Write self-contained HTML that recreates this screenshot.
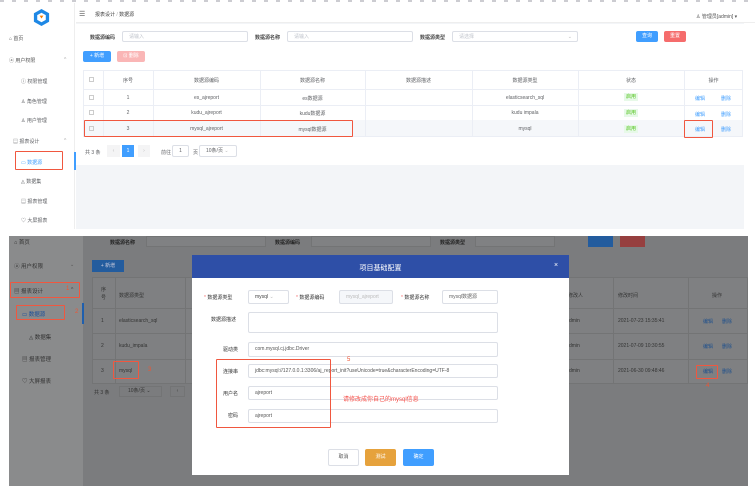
<!DOCTYPE html>
<html><head><meta charset="utf-8"><style>
*{margin:0;padding:0;box-sizing:border-box}
body{width:755px;height:488px;background:#fff;position:relative;overflow:hidden;font-family:"Liberation Sans","Noto Sans CJK SC",sans-serif;font-size:5px;color:#606266}
.a{position:absolute;white-space:nowrap}
.box{position:absolute;border:1px solid #dcdfe6;background:#fff;border-radius:2px}
.rb{position:absolute;border:1.5px solid #f0573f;border-radius:1px}
.btn{position:absolute;border-radius:2px;color:#fff;text-align:center;font-size:5px}
.ph{color:#c0c4cc;padding-left:6px;line-height:10px}
.td{position:absolute;text-align:center;font-size:5px;color:#606266}
</style></head><body>
<div class="a" style="left:0;top:0;width:755px;height:2px;background:repeating-linear-gradient(90deg,#556 0 4px,#fff 4px 12px);opacity:.3"></div>

<div class="a" style="left:0;top:3px;width:75px;height:226px;background:#fff;border-right:1px solid #eee"></div>
<svg class="a" style="left:32px;top:8px" width="19" height="19" viewBox="0 0 20 20"><path d="M10 1 L18 5.5 V14.5 L10 19 L2 14.5 V5.5Z" fill="#1e88e5"/><path d="M10 5 L14.5 7.5 V12.5 L10 15 L5.5 12.5 V7.5Z" fill="#fff"/><path d="M8 8h4l-2 3z" fill="#f57c00"/></svg>
<div class="a" style="left:9px;top:35px;color:#555">⌂ 首页</div>
<div class="a" style="left:9px;top:57px;color:#555">ⓐ 用户权限</div><div class="a" style="left:64px;top:57px;color:#aaa">^</div>
<div class="a" style="left:21px;top:78px">ⓘ 权限管理</div>
<div class="a" style="left:21px;top:98px">♙ 角色管理</div>
<div class="a" style="left:21px;top:117px">♙ 用户管理</div>
<div class="a" style="left:13px;top:138px">▤ 报表设计</div><div class="a" style="left:64px;top:138px;color:#aaa">^</div>
<div class="a" style="left:21px;top:159px;color:#409eff">▭ 数据源</div>
<div class="rb" style="left:15px;top:151px;width:48px;height:19px"></div>
<div class="a" style="left:74px;top:152px;width:2px;height:18px;background:#409eff"></div>
<div class="a" style="left:21px;top:178px">◬ 数据集</div>
<div class="a" style="left:21px;top:198px">▤ 报表管理</div>
<div class="a" style="left:21px;top:217px">♡ 大屏报表</div>

<div class="a" style="left:76px;top:3px;width:668px;height:226px;background:#f3f5f8"></div>
<div class="a" style="left:76px;top:3px;width:679px;height:20px;background:#fff;border-bottom:1px solid #eee"></div>
<div class="a" style="left:79px;top:10px;font-size:7px;color:#555">☰</div>
<div class="a" style="left:95px;top:11px;color:#444">报表设计 <span style="color:#aaa">/</span> 数据源</div>
<div class="a" style="left:696px;top:13px;color:#555">♙ 管理员[admin] ▾</div>
<div class="a" style="left:76px;top:24px;width:668px;height:141px;background:#fff"></div>

<div class="a" style="left:90px;top:34px;color:#444;font-weight:bold">数据源编码</div>
<div class="box ph" style="left:122px;top:31px;width:126px;height:11px">请输入</div>
<div class="a" style="left:255px;top:34px;color:#444;font-weight:bold">数据源名称</div>
<div class="box ph" style="left:287px;top:31px;width:126px;height:11px">请输入</div>
<div class="a" style="left:420px;top:34px;color:#444;font-weight:bold">数据源类型</div>
<div class="box ph" style="left:452px;top:31px;width:126px;height:11px">请选择<span style="position:absolute;right:5px;color:#bbb">⌄</span></div>
<div class="btn" style="left:636px;top:31px;width:22px;height:11px;background:#409eff;line-height:11px">查询</div>
<div class="btn" style="left:664px;top:31px;width:22px;height:11px;background:#f56c6c;line-height:11px">重置</div>
<div class="btn" style="left:83px;top:51px;width:28px;height:11px;background:#409eff;line-height:11px">+ 新增</div>
<div class="btn" style="left:117px;top:51px;width:28px;height:11px;background:#fab6b6;line-height:11px">⊡ 删除</div>

<div class="a" style="left:83px;top:70px;width:660px;height:67px;border:1px solid #ebeef5"></div>
<div class="a" style="left:83px;top:89px;width:660px;height:1px;background:#ebeef5"></div>
<div class="a" style="left:83px;top:105px;width:660px;height:1px;background:#ebeef5"></div>
<div class="a" style="left:84px;top:120px;width:658px;height:16px;background:#f5f7fa"></div>
<div class="a" style="left:103px;top:70px;width:1px;height:67px;background:#ebeef5"></div>
<div class="a" style="left:153px;top:70px;width:1px;height:67px;background:#ebeef5"></div>
<div class="a" style="left:260px;top:70px;width:1px;height:67px;background:#ebeef5"></div>
<div class="a" style="left:365px;top:70px;width:1px;height:67px;background:#ebeef5"></div>
<div class="a" style="left:472px;top:70px;width:1px;height:67px;background:#ebeef5"></div>
<div class="a" style="left:578px;top:70px;width:1px;height:67px;background:#ebeef5"></div>
<div class="a" style="left:684px;top:70px;width:1px;height:67px;background:#ebeef5"></div>
<div class="a" style="left:89px;top:77px;width:5px;height:5px;border:1px solid #ccc"></div>
<div class="td" style="left:103px;top:77px;width:50px">序号</div>
<div class="td" style="left:153px;top:77px;width:107px">数据源编码</div>
<div class="td" style="left:260px;top:77px;width:105px">数据源名称</div>
<div class="td" style="left:365px;top:77px;width:107px">数据源描述</div>
<div class="td" style="left:472px;top:77px;width:106px">数据源类型</div>
<div class="td" style="left:578px;top:77px;width:106px">状态</div>
<div class="td" style="left:684px;top:77px;width:59px">操作</div>
<div class="a" style="left:89px;top:95px;width:5px;height:5px;border:1px solid #ccc"></div>
<div class="a" style="left:89px;top:110px;width:5px;height:5px;border:1px solid #ccc"></div>
<div class="a" style="left:89px;top:126px;width:5px;height:5px;border:1px solid #ccc"></div>
<div class="td" style="left:103px;top:95px;width:50px">1</div>
<div class="td" style="left:103px;top:110px;width:50px">2</div>
<div class="td" style="left:103px;top:126px;width:50px">3</div>
<div class="td" style="left:153px;top:95px;width:107px">es_ajreport</div>
<div class="td" style="left:153px;top:110px;width:107px">kudu_ajreport</div>
<div class="td" style="left:153px;top:126px;width:107px">mysql_ajreport</div>
<div class="td" style="left:260px;top:95px;width:105px">es数据源</div>
<div class="td" style="left:260px;top:110px;width:105px">kudu数据源</div>
<div class="td" style="left:260px;top:126px;width:105px">mysql数据源</div>
<div class="td" style="left:472px;top:95px;width:106px">elasticsearch_sql</div>
<div class="td" style="left:472px;top:110px;width:106px">kudu impala</div>
<div class="td" style="left:472px;top:126px;width:106px">mysql</div>
<div class="a" style="left:624px;top:93px;width:14px;height:8px;background:#e7f9e8;color:#52c41a;text-align:center;line-height:8px">启用</div>
<div class="a" style="left:624px;top:109px;width:14px;height:8px;background:#e7f9e8;color:#52c41a;text-align:center;line-height:8px">启用</div>
<div class="a" style="left:624px;top:125px;width:14px;height:8px;background:#e7f9e8;color:#52c41a;text-align:center;line-height:8px">启用</div>
<div class="a" style="left:695px;top:95px;color:#409eff">编辑</div><div class="a" style="left:721px;top:95px;color:#409eff">删除</div>
<div class="a" style="left:695px;top:111px;color:#409eff">编辑</div><div class="a" style="left:721px;top:111px;color:#409eff">删除</div>
<div class="a" style="left:695px;top:126px;color:#409eff">编辑</div><div class="a" style="left:721px;top:126px;color:#409eff">删除</div>
<div class="rb" style="left:84px;top:120px;width:269px;height:17px"></div>
<div class="rb" style="left:684px;top:120px;width:29px;height:18px"></div>
<div class="a" style="left:85px;top:149px">共 3 条</div>
<div class="a" style="left:107px;top:145px;width:13px;height:12px;background:#f4f4f5;color:#bbb;text-align:center;line-height:12px">‹</div>
<div class="a" style="left:122px;top:145px;width:12px;height:12px;background:#409eff;color:#fff;text-align:center;line-height:12px">1</div>
<div class="a" style="left:138px;top:145px;width:12px;height:12px;background:#f4f4f5;color:#bbb;text-align:center;line-height:12px">›</div>
<div class="a" style="left:161px;top:149px">前往</div>
<div class="box" style="left:172px;top:145px;width:17px;height:12px;text-align:center;line-height:10px">1</div>
<div class="a" style="left:193px;top:149px">页</div>
<div class="box" style="left:199px;top:145px;width:38px;height:12px;line-height:10px;padding-left:6px">10条/页 <span style="color:#bbb">⌄</span></div>

<div class="a" style="left:9px;top:236px;width:74px;height:250px;background:#8a8b8c"></div>
<div class="a" style="left:83px;top:236px;width:665px;height:250px;background:#7b7c7e"></div>
<div class="a" style="left:14px;top:238px;color:#333;font-size:5.5px">⌂ 首页</div>
<div class="a" style="left:14px;top:262px;color:#333;font-size:5.5px">ⓐ 用户权限</div><div class="a" style="left:70px;top:262px;color:#555">⌄</div>
<div class="a" style="left:14px;top:287px;color:#333;font-size:5.5px">▤ 报表设计</div>
<div class="a" style="left:66px;top:286px;color:#e53;font-size:6px">1</div><div class="a" style="left:71px;top:287px;color:#444">^</div>
<div class="rb" style="left:10px;top:282px;width:70px;height:16px"></div>
<div class="a" style="left:22px;top:310px;color:#1a4f9a;font-size:5.5px">▭ 数据源</div>
<div class="rb" style="left:16px;top:305px;width:49px;height:15px"></div>
<div class="a" style="left:75px;top:309px;color:#e53;font-size:6px">2</div>
<div class="a" style="left:82px;top:303px;width:1.5px;height:21px;background:#1f5fae"></div>
<div class="a" style="left:29px;top:333px;color:#333;font-size:5.5px">◬ 数据集</div>
<div class="a" style="left:22px;top:355px;color:#333;font-size:5.5px">▤ 报表管理</div>
<div class="a" style="left:22px;top:377px;color:#333;font-size:5.5px">♡ 大屏报表</div>

<div class="a" style="left:110px;top:239px;color:#222;font-weight:bold">数据源名称</div>
<div class="a" style="left:146px;top:236px;width:120px;height:11px;background:#808183;border:1px solid #737475"></div>
<div class="a" style="left:275px;top:239px;color:#222;font-weight:bold">数据源编码</div>
<div class="a" style="left:311px;top:236px;width:120px;height:11px;background:#808183;border:1px solid #737475"></div>
<div class="a" style="left:440px;top:239px;color:#222;font-weight:bold">数据源类型</div>
<div class="a" style="left:475px;top:236px;width:80px;height:11px;background:#808183;border:1px solid #737475"></div>
<div class="a" style="left:588px;top:236px;width:25px;height:11px;background:#235c9e"></div>
<div class="a" style="left:620px;top:236px;width:25px;height:11px;background:#963f3f"></div>
<div class="a" style="left:92px;top:260px;width:32px;height:12px;background:#235c9e;color:#ccd;text-align:center;line-height:12px">+ 新增</div>

<div class="a" style="left:92px;top:277px;width:656px;height:107px;background:#7f8082;border:1px solid #737475"></div>
<div class="a" style="left:92px;top:308px;width:656px;height:1px;background:#737475"></div>
<div class="a" style="left:92px;top:333px;width:656px;height:1px;background:#737475"></div>
<div class="a" style="left:92px;top:359px;width:656px;height:1px;background:#737475"></div>
<div class="a" style="left:115px;top:277px;width:1px;height:107px;background:#737475"></div>
<div class="a" style="left:185px;top:277px;width:1px;height:107px;background:#737475"></div>
<div class="a" style="left:613px;top:277px;width:1px;height:107px;background:#737475"></div>
<div class="a" style="left:688px;top:277px;width:1px;height:107px;background:#737475"></div>
<div class="a" style="left:101px;top:286px;color:#333;line-height:8px">序<br>号</div>
<div class="a" style="left:119px;top:292px;color:#333">数据源类型</div>
<div class="a" style="left:101px;top:318px;color:#333">1</div><div class="a" style="left:119px;top:318px;color:#333">elasticsearch_sql</div>
<div class="a" style="left:101px;top:343px;color:#333">2</div><div class="a" style="left:119px;top:343px;color:#333">kudu_impala</div>
<div class="a" style="left:101px;top:368px;color:#333">3</div><div class="a" style="left:119px;top:368px;color:#333">mysql</div>
<div class="rb" style="left:113px;top:361px;width:26px;height:18px"></div>
<div class="a" style="left:148px;top:367px;color:#e53;font-size:6px">3</div>
<div class="a" style="left:568px;top:292px;color:#333">修改人</div>
<div class="a" style="left:618px;top:292px;color:#333">修改时间</div>
<div class="a" style="left:712px;top:292px;color:#333">操作</div>
<div class="a" style="left:569px;top:318px;color:#333">dmin</div><div class="a" style="left:618px;top:318px;color:#333">2021-07-23 15:35:41</div>
<div class="a" style="left:569px;top:343px;color:#333">dmin</div><div class="a" style="left:618px;top:343px;color:#333">2021-07-09 10:30:55</div>
<div class="a" style="left:569px;top:368px;color:#333">dmin</div><div class="a" style="left:618px;top:368px;color:#333">2021-06-30 09:48:46</div>
<div class="a" style="left:703px;top:318px;color:#1e4f8c">编辑</div><div class="a" style="left:722px;top:318px;color:#1e4f8c">删除</div>
<div class="a" style="left:703px;top:343px;color:#1e4f8c">编辑</div><div class="a" style="left:722px;top:343px;color:#1e4f8c">删除</div>
<div class="a" style="left:703px;top:368px;color:#1e4f8c">编辑</div><div class="a" style="left:722px;top:368px;color:#1e4f8c">删除</div>
<div class="rb" style="left:696px;top:365px;width:22px;height:14px"></div>
<div class="a" style="left:706px;top:383px;color:#e53;font-size:6px">4</div>
<div class="a" style="left:94px;top:389px;color:#333">共 3 条</div>
<div class="a" style="left:119px;top:386px;width:43px;height:11px;border:1px solid #737475;color:#333;padding-left:8px;line-height:9px">10条/页 ⌄</div>
<div class="a" style="left:170px;top:386px;width:15px;height:11px;border:1px solid #737475;color:#444;text-align:center;line-height:9px">‹</div>

<div class="a" style="left:192px;top:255px;width:377px;height:220px;background:#fff"></div>
<div class="a" style="left:192px;top:255px;width:377px;height:23px;background:#2e4fa7"></div>
<div class="a" style="left:192px;top:263px;width:377px;text-align:center;color:#fff;font-size:7px">项目基础配置</div>
<div class="a" style="left:554px;top:262px;color:#fff;font-size:7px">×</div>

<div class="a" style="left:204px;top:294px;color:#333"><span style="color:#f56c6c">* </span>数据源类型</div>
<div class="box" style="left:248px;top:290px;width:41px;height:14px;line-height:12px;padding-left:6px;color:#444">mysql <span style="color:#bbb">⌄</span></div>
<div class="a" style="left:296px;top:294px;color:#333"><span style="color:#f56c6c">* </span>数据源编码</div>
<div class="box" style="left:339px;top:290px;width:54px;height:14px;line-height:12px;padding-left:6px;color:#bbb;background:#f5f7fa">mysql_ajreport</div>
<div class="a" style="left:401px;top:294px;color:#333"><span style="color:#f56c6c">* </span>数据源名称</div>
<div class="box" style="left:442px;top:290px;width:56px;height:14px;line-height:12px;padding-left:6px;color:#666">mysql数据源</div>

<div class="a" style="left:211px;top:316px;color:#333">数据源描述</div>
<div class="box" style="left:248px;top:312px;width:250px;height:21px"></div>
<div class="a" style="left:223px;top:346px;color:#333">驱动类</div>
<div class="box" style="left:248px;top:342px;width:250px;height:15px;line-height:13px;padding-left:6px;color:#555">com.mysql.cj.jdbc.Driver</div>
<div class="a" style="left:223px;top:368px;color:#333">连接串</div>
<div class="box" style="left:248px;top:364px;width:250px;height:14px;line-height:12px;padding-left:6px;color:#555;overflow:hidden">jdbc:mysql://127.0.0.1:3306/aj_report_init?useUnicode=true&amp;characterEncoding=UTF-8</div>
<div class="a" style="left:223px;top:390px;color:#333">用户名</div>
<div class="box" style="left:248px;top:386px;width:250px;height:14px;line-height:12px;padding-left:6px;color:#555">ajreport</div>
<div class="a" style="left:228px;top:412px;color:#333">密码</div>
<div class="box" style="left:248px;top:409px;width:250px;height:14px;line-height:12px;padding-left:6px;color:#555">ajreport</div>
<div class="rb" style="left:216px;top:359px;width:115px;height:69px"></div>
<div class="a" style="left:347px;top:357px;color:#e53;font-size:6px">5</div>
<div class="a" style="left:343px;top:394px;color:#f5504a;font-size:6px">请修改成你自己的mysql信息</div>

<div class="box" style="left:328px;top:449px;width:31px;height:17px;text-align:center;line-height:15px;color:#555">取消</div>
<div class="btn" style="left:365px;top:449px;width:31px;height:17px;background:#e6a23c;line-height:17px">测试</div>
<div class="btn" style="left:403px;top:449px;width:31px;height:17px;background:#409eff;line-height:17px">确定</div>
</body></html>
